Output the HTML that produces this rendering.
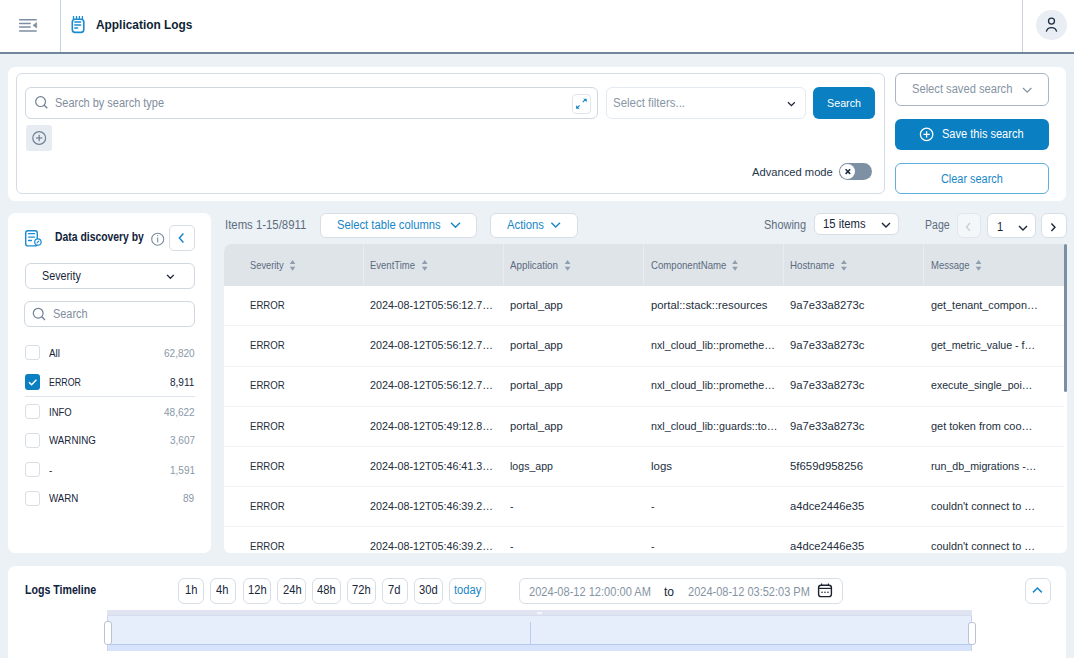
<!DOCTYPE html>
<html><head><meta charset="utf-8"><style>
html,body{margin:0;padding:0;}
body{width:1074px;height:658px;overflow:hidden;position:relative;background:#ecf1f5;font-family:"Liberation Sans",sans-serif;}
.t{position:absolute;white-space:nowrap;transform-origin:0 0;}
.b{position:absolute;box-sizing:border-box;}
svg{position:absolute;overflow:visible;}
</style></head><body>
<!-- header -->
<div class="b" style="left:0;top:0;width:1074px;height:54px;background:#fff;border-bottom:2px solid #70869c;"></div>
<div class="b" style="left:60px;top:0;width:1px;height:52px;background:#c9d1db;"></div>
<div class="b" style="left:1022px;top:0;width:1px;height:52px;background:#c9d1db;"></div>
<svg style="left:0;top:0" width="60" height="52">
  <g stroke="#7d8ea3" stroke-width="1.5" fill="none" stroke-linecap="round">
    <line x1="19.6" y1="19.7" x2="36.2" y2="19.7"/>
    <line x1="19.6" y1="23.5" x2="30.2" y2="23.5"/>
    <line x1="19.6" y1="27.1" x2="30.2" y2="27.1"/>
    <line x1="19.6" y1="31" x2="36.2" y2="31"/>
  </g>
  <path d="M33 25.3 L36.7 22.5 L36.7 28 Z" fill="#7d8ea3" stroke="#7d8ea3" stroke-width="0.6" stroke-linejoin="round"/>
</svg>
<svg style="left:0;top:0" width="100" height="52">
  <rect x="72.3" y="19.2" width="11.5" height="13.2" rx="2.8" fill="none" stroke="#1a8bd0" stroke-width="1.6"/>
  <g stroke="#1a8bd0" stroke-width="1.3"><line x1="73.5" y1="16" x2="73.5" y2="19"/><line x1="76.5" y1="16" x2="76.5" y2="19"/><line x1="79.4" y1="16" x2="79.4" y2="19"/><line x1="82.4" y1="16" x2="82.4" y2="19"/></g>
  <g stroke="#1a8bd0" stroke-width="1.5" stroke-linecap="round"><line x1="74.8" y1="22" x2="80.6" y2="22"/><line x1="74.8" y1="25" x2="80.6" y2="25"/><line x1="74.8" y1="28" x2="77.5" y2="28"/></g>
</svg>
<div class="b" style="left:1036px;top:9.6px;width:30.5px;height:30.5px;border-radius:50%;background:#e9eef4;"></div>
<svg style="left:0;top:0" width="1074" height="52">
  <circle cx="1051.5" cy="21.1" r="3.0" fill="none" stroke="#1d2e45" stroke-width="1.3"/>
  <path d="M1046.3 31.6 A5.4 5.4 0 0 1 1056.7 31.6" fill="none" stroke="#1d2e45" stroke-width="1.3"/>
</svg>

<!-- top panel -->
<div class="b" style="left:8px;top:67px;width:1058px;height:133.5px;background:#fff;border-radius:7px;"></div>
<div class="b" style="left:16px;top:73px;width:869px;height:121px;border:1px solid #d5dce5;border-radius:6px;"></div>
<div class="b" style="left:25px;top:87px;width:573px;height:32px;border:1px solid #cfd7e0;border-radius:6px;"></div>
<svg style="left:0;top:0" width="60" height="120">
  <circle cx="40.6" cy="101.6" r="4.9" fill="none" stroke="#6f8195" stroke-width="1.2"/>
  <line x1="44.2" y1="105.2" x2="47.3" y2="108.3" stroke="#6f8195" stroke-width="1.3"/>
</svg>
<div class="b" style="left:572px;top:94px;width:19px;height:20px;border:1px solid #e0e5eb;border-radius:4px;"></div>
<svg style="left:0;top:0" width="600" height="120">
  <g stroke="#1787c8" stroke-width="1.2" fill="none"><line x1="579.6" y1="105.3" x2="577.4" y2="107.5"/><line x1="582.8" y1="102.1" x2="585" y2="99.9"/></g>
  <path d="M576.1 108.7 L576.1 105.2 L579.6 108.7 Z M586.7 98.7 L583.2 98.7 L586.7 102.2 Z" fill="#1787c8"/>
</svg>
<div class="b" style="left:605.5px;top:87px;width:200.5px;height:32px;border:1px solid #e5eaf0;border-radius:6px;"></div>
<svg style="left:0;top:0" width="900" height="200">
  <path d="M788 102.3 L791.4 105.7 L794.8 102.3" fill="none" stroke="#1d2636" stroke-width="1.3"/>
</svg>
<div class="b" style="left:813px;top:87px;width:62px;height:32px;background:#0a7fc2;border-radius:6px;"></div>
<div class="b" style="left:26px;top:125px;width:26px;height:26px;background:#e6ecf2;border-radius:3px;"></div>
<svg style="left:0;top:0" width="60" height="160">
  <circle cx="39.2" cy="138" r="6.4" fill="none" stroke="#6d7f93" stroke-width="1.2"/>
  <g stroke="#6d7f93" stroke-width="1.2"><line x1="36" y1="138" x2="42.4" y2="138"/><line x1="39.2" y1="134.8" x2="39.2" y2="141.2"/></g>
</svg>
<!-- toggle -->
<div class="b" style="left:839px;top:163px;width:32.5px;height:17px;background:#7e90a4;border-radius:9px;"></div>
<div class="b" style="left:840.4px;top:164px;width:15px;height:15px;background:#fff;border-radius:50%;"></div>
<svg style="left:0;top:0" width="900" height="200">
  <g stroke="#1b2a3d" stroke-width="1.5"><line x1="845.6" y1="169.3" x2="850.2" y2="173.9"/><line x1="850.2" y1="169.3" x2="845.6" y2="173.9"/></g>
</svg>
<!-- right column -->
<div class="b" style="left:895px;top:73px;width:154px;height:33px;border:1px solid #a9b6c5;border-radius:6px;"></div>
<svg style="left:0;top:0" width="1074" height="200">
  <path d="M1023 88 L1027.2 92.2 L1031.4 88" fill="none" stroke="#8391a1" stroke-width="1.2"/>
</svg>
<div class="b" style="left:895px;top:119px;width:154px;height:31px;background:#0a7fc2;border-radius:6px;"></div>
<svg style="left:0;top:0" width="1074" height="200">
  <circle cx="926.6" cy="134.4" r="6.2" fill="none" stroke="#fff" stroke-width="1.3"/>
  <g stroke="#fff" stroke-width="1.3"><line x1="923.4" y1="134.4" x2="929.8" y2="134.4"/><line x1="926.6" y1="131.2" x2="926.6" y2="137.6"/></g>
</svg>
<div class="b" style="left:895px;top:163px;width:154px;height:31px;border:1px solid #5eaee0;border-radius:6px;"></div>

<!-- left panel -->
<div class="b" style="left:8px;top:213px;width:203px;height:340px;background:#fff;border-radius:7px;"></div>
<svg style="left:0;top:0" width="220" height="260">
  <rect x="25.7" y="230.7" width="11.6" height="15.2" rx="2.2" fill="none" stroke="#1a8bd0" stroke-width="1.4"/>
  <g stroke="#1a8bd0" stroke-width="1.3" stroke-linecap="round"><line x1="28.6" y1="233.7" x2="34.6" y2="233.7"/><line x1="28.6" y1="237.1" x2="34.6" y2="237.1"/><line x1="28.6" y1="240.5" x2="31.4" y2="240.5"/></g>
  <circle cx="37.9" cy="242" r="3.2" fill="#fff" stroke="#1a8bd0" stroke-width="1.2"/>
  <line x1="37" y1="242.9" x2="38.8" y2="241.1" stroke="#1a8bd0" stroke-width="1.1" stroke-linecap="round"/>
  <circle cx="157.7" cy="239.2" r="6" fill="none" stroke="#7c8da0" stroke-width="1.1"/>
  <line x1="157.7" y1="237.6" x2="157.7" y2="242.6" stroke="#7c8da0" stroke-width="1.1"/>
  <circle cx="157.7" cy="235.6" r="0.7" fill="#7c8da0"/>
</svg>
<div class="b" style="left:169px;top:225px;width:26px;height:26px;border:1px solid #d6dde6;border-radius:5px;"></div>
<svg style="left:0;top:0" width="220" height="260">
  <path d="M183.4 233.6 L179.4 238 L183.4 242.4" fill="none" stroke="#1787c8" stroke-width="1.5"/>
</svg>
<div class="b" style="left:25px;top:263px;width:170px;height:26px;border:1px solid #cfd7e0;border-radius:6px;"></div>
<svg style="left:0;top:0" width="220" height="300">
  <path d="M167 274.9 L170.4 278.3 L173.8 274.9" fill="none" stroke="#1d2636" stroke-width="1.3"/>
</svg>
<div class="b" style="left:24px;top:301px;width:171px;height:26px;border:1px solid #cfd7e0;border-radius:6px;"></div>
<svg style="left:0;top:0" width="220" height="340">
  <circle cx="38.2" cy="313.2" r="4.9" fill="none" stroke="#6f8195" stroke-width="1.2"/>
  <line x1="41.8" y1="316.8" x2="45" y2="320" stroke="#6f8195" stroke-width="1.3"/>
</svg>
<!-- checkboxes -->
<div class="b" style="left:25px;top:345px;width:15.3px;height:15.3px;border:1px solid #d9dfe7;border-radius:3px;"></div>
<div class="b" style="left:25px;top:374.4px;width:15.3px;height:15.3px;background:#0a7fc2;border-radius:3px;"></div>
<svg style="left:0;top:0" width="60" height="400">
  <path d="M29 382.2 L31.6 384.7 L36.4 379.8" fill="none" stroke="#fff" stroke-width="1.4"/>
</svg>
<div class="b" style="left:25px;top:396px;width:170px;height:1px;background:#dfe4ea;"></div>
<div class="b" style="left:25px;top:403.5px;width:15.3px;height:15.3px;border:1px solid #d9dfe7;border-radius:3px;"></div>
<div class="b" style="left:25px;top:432.5px;width:15.3px;height:15.3px;border:1px solid #d9dfe7;border-radius:3px;"></div>
<div class="b" style="left:25px;top:461.5px;width:15.3px;height:15.3px;border:1px solid #d9dfe7;border-radius:3px;"></div>
<div class="b" style="left:25px;top:490.5px;width:15.3px;height:15.3px;border:1px solid #d9dfe7;border-radius:3px;"></div>

<!-- toolbar -->
<div class="b" style="left:320px;top:213px;width:156.5px;height:24.5px;background:#fff;border:1px solid #d8dee6;border-radius:6px;"></div>
<div class="b" style="left:490px;top:213px;width:87.5px;height:24.5px;background:#fff;border:1px solid #d8dee6;border-radius:6px;"></div>
<svg style="left:0;top:0" width="600" height="240">
  <path d="M451 222.8 L455.5 227.3 L460 222.8" fill="none" stroke="#1787c8" stroke-width="1.4"/>
  <path d="M551.4 222.8 L555.7 227.1 L560 222.8" fill="none" stroke="#1787c8" stroke-width="1.4"/>
</svg>
<div class="b" style="left:814px;top:213px;width:85px;height:21.5px;background:#fff;border:1px solid #d8dee6;border-radius:6px;"></div>
<div class="b" style="left:956.5px;top:213px;width:24px;height:25px;background:#f4f7fa;border:1px solid #e2e7ed;border-radius:6px;"></div>
<div class="b" style="left:987px;top:213px;width:48.5px;height:24.5px;background:#fff;border:1px solid #d8dee6;border-radius:6px;"></div>
<div class="b" style="left:1041px;top:213px;width:25.5px;height:25px;background:#fff;border:1px solid #d8dee6;border-radius:6px;"></div>
<svg style="left:0;top:0" width="1074" height="240">
  <path d="M882 223 L886 227 L890 223" fill="none" stroke="#1d2636" stroke-width="1.4"/>
  <path d="M1019 226 L1023 230 L1027 226" fill="none" stroke="#1d2636" stroke-width="1.4"/>
  <path d="M970 223 L966.4 226.9 L970 230.8" fill="none" stroke="#c3ccd6" stroke-width="1.2"/>
  <path d="M1051.4 223.4 L1055 227.2 L1051.4 231" fill="none" stroke="#1d2636" stroke-width="1.4"/>
</svg>

<!-- table -->
<div class="b" style="left:224px;top:244px;width:842.5px;height:309px;background:#fff;border-radius:7px 0 6px 6px;overflow:hidden;">
  <div class="b" style="left:0;top:0;width:100%;height:41.5px;background:#dfe4e9;"></div>
</div>
<div class="b" style="left:363px;top:244px;width:1px;height:41px;background:#e9edf1;"></div>
<div class="b" style="left:503px;top:244px;width:1px;height:41px;background:#e9edf1;"></div>
<div class="b" style="left:643px;top:244px;width:1px;height:41px;background:#e9edf1;"></div>
<div class="b" style="left:783px;top:244px;width:1px;height:41px;background:#e9edf1;"></div>
<div class="b" style="left:923px;top:244px;width:1px;height:41px;background:#e9edf1;"></div>
<div class="b" style="left:224px;top:325px;width:840px;height:1px;background:#f1f3f6;"></div>
<div class="b" style="left:224px;top:365.5px;width:840px;height:1px;background:#f1f3f6;"></div>
<div class="b" style="left:224px;top:405.5px;width:840px;height:1px;background:#f1f3f6;"></div>
<div class="b" style="left:224px;top:446px;width:840px;height:1px;background:#f1f3f6;"></div>
<div class="b" style="left:224px;top:486px;width:840px;height:1px;background:#f1f3f6;"></div>
<div class="b" style="left:224px;top:526px;width:840px;height:1px;background:#f1f3f6;"></div>
<div class="b" style="left:1063.6px;top:244px;width:3px;height:148px;background:#7b8ea3;border-radius:1.5px;"></div>
<svg style="left:0;top:0" width="1074" height="300">
  <g fill="#8f9dad">
    <path d="M289.8 264 L292.55 260 L295.3 264 Z M289.8 266.8 L292.55 270.8 L295.3 266.8 Z"/>
    <path d="M421.9 264 L424.75 260 L427.6 264 Z M421.9 266.8 L424.75 270.8 L427.6 266.8 Z"/>
    <path d="M564.8 264 L567.60 260 L570.4 264 Z M564.8 266.8 L567.60 270.8 L570.4 266.8 Z"/>
    <path d="M732.2 264 L735.00 260 L737.8 264 Z M732.2 266.8 L735.00 270.8 L737.8 266.8 Z"/>
    <path d="M841.0 264 L843.90 260 L846.8 264 Z M841.0 266.8 L843.90 270.8 L846.8 266.8 Z"/>
    <path d="M975.7 264 L978.55 260 L981.4 264 Z M975.7 266.8 L978.55 270.8 L981.4 266.8 Z"/>
  </g>
</svg>

<!-- timeline -->
<div class="b" style="left:8px;top:566px;width:1058px;height:100px;background:#fff;border-radius:7px;"></div>
<div class="b" style="left:178px;top:578px;width:26px;height:25.5px;border:1px solid #d8dee6;border-radius:6px;"></div>
<div class="b" style="left:210px;top:578px;width:25.5px;height:25.5px;border:1px solid #d8dee6;border-radius:6px;"></div>
<div class="b" style="left:242.5px;top:578px;width:28.5px;height:25.5px;border:1px solid #d8dee6;border-radius:6px;"></div>
<div class="b" style="left:277px;top:578px;width:28.8px;height:25.5px;border:1px solid #d8dee6;border-radius:6px;"></div>
<div class="b" style="left:312px;top:578px;width:28.5px;height:25.5px;border:1px solid #d8dee6;border-radius:6px;"></div>
<div class="b" style="left:347px;top:578px;width:28.5px;height:25.5px;border:1px solid #d8dee6;border-radius:6px;"></div>
<div class="b" style="left:382px;top:578px;width:25.5px;height:25.5px;border:1px solid #d8dee6;border-radius:6px;"></div>
<div class="b" style="left:414px;top:578px;width:29px;height:25.5px;border:1px solid #d8dee6;border-radius:6px;"></div>
<div class="b" style="left:449px;top:578px;width:37px;height:25.5px;border:1px solid #d8dee6;border-radius:6px;"></div>
<div class="b" style="left:518.5px;top:578px;width:324.5px;height:25.5px;border:1px solid #d8dee6;border-radius:6px;"></div>
<svg style="left:0;top:0" width="1074" height="658">
  <rect x="818.6" y="585.2" width="12.8" height="11.4" rx="2.4" fill="none" stroke="#1b2230" stroke-width="1.4"/>
  <line x1="818.6" y1="588.4" x2="831.4" y2="588.4" stroke="#1b2230" stroke-width="1.2"/>
  <g stroke="#1b2230" stroke-width="1.1"><line x1="821.6" y1="583.4" x2="821.6" y2="585.6"/><line x1="828.4" y1="583.4" x2="828.4" y2="585.6"/></g>
  <g fill="#1b2230"><circle cx="822" cy="592.2" r="0.8"/><circle cx="825" cy="592.2" r="0.8"/><circle cx="828" cy="592.2" r="0.8"/></g>
</svg>
<div class="b" style="left:1025px;top:578px;width:25.5px;height:25.5px;border:1px solid #d8dee6;border-radius:6px;"></div>
<svg style="left:0;top:0" width="1074" height="658">
  <path d="M1033 592.4 L1037.4 588 L1041.8 592.4" fill="none" stroke="#1787c8" stroke-width="1.5"/>
</svg>
<!-- timeline chart -->
<div class="b" style="left:107px;top:610px;width:865px;height:5.5px;background:#dfe4f0;"></div>
<div class="b" style="left:107px;top:615.5px;width:865px;height:29px;background:#e6edfb;"></div>
<div class="b" style="left:107px;top:644px;width:865px;height:1px;background:#b6cbf4;"></div>
<div class="b" style="left:107px;top:645px;width:865px;height:6px;background:#d6e3fb;"></div>
<div class="b" style="left:107px;top:615.5px;width:1.2px;height:35px;background:#c9d5ee;"></div>
<div class="b" style="left:970.8px;top:615.5px;width:1.2px;height:35px;background:#c9d5ee;"></div>
<div class="b" style="left:530px;top:622px;width:1.3px;height:22px;background:#b8cdf5;"></div>
<div class="b" style="left:537px;top:611.7px;width:5.4px;height:2.2px;background:#f4f6fb;"></div>
<div class="b" style="left:107px;top:614.8px;width:865px;height:0.8px;background:#d6ddef;"></div>
<div class="b" style="left:104px;top:621px;width:7.8px;height:23.6px;background:#fff;border:1px solid #b9c3d3;border-radius:3px;"></div>
<div class="b" style="left:968.2px;top:621.5px;width:7.8px;height:23.2px;background:#fff;border:1px solid #b9c3d3;border-radius:3px;"></div>

<span class="t" style="top:17.69px;font-size:13.00px;line-height:13px;color:#0e1f36;font-weight:bold;left:96.00px;transform:scaleX(0.9143);">Application Logs</span>
<span class="t" style="top:96.64px;font-size:12.00px;line-height:12px;color:#7f8d9d;left:55.40px;transform:scaleX(0.9129);">Search by search type</span>
<span class="t" style="top:96.64px;font-size:12.00px;line-height:12px;color:#8896a6;left:612.90px;transform:scaleX(0.9554);">Select filters...</span>
<span class="t" style="top:97.55px;font-size:11.40px;line-height:11px;color:#ffffff;left:827.00px;transform:scaleX(0.9421);">Search</span>
<span class="t" style="top:166.08px;font-size:11.60px;line-height:12px;color:#26364a;left:752.20px;transform:scaleX(0.9643);">Advanced mode</span>
<span class="t" style="top:83.24px;font-size:12.00px;line-height:12px;color:#8593a3;left:912.00px;transform:scaleX(0.9291);">Select saved search</span>
<span class="t" style="top:128.34px;font-size:12.00px;line-height:12px;color:#ffffff;left:942.00px;transform:scaleX(0.9198);">Save this search</span>
<span class="t" style="top:172.64px;font-size:12.00px;line-height:12px;color:#1787c8;left:941.00px;transform:scaleX(0.9085);">Clear search</span>
<span class="t" style="top:230.64px;font-size:12.00px;line-height:12px;color:#10223a;font-weight:bold;left:54.70px;transform:scaleX(0.8655);">Data discovery by</span>
<span class="t" style="top:269.84px;font-size:12.00px;line-height:12px;color:#17263a;left:41.80px;transform:scaleX(0.8951);">Severity</span>
<span class="t" style="top:307.74px;font-size:12.00px;line-height:12px;color:#7f8d9d;left:53.40px;transform:scaleX(0.9100);">Search</span>
<span class="t" style="top:348.36px;font-size:10.50px;line-height:10px;color:#17263a;left:49.10px;transform:scaleX(0.9427);">All</span>
<span class="t" style="top:348.36px;font-size:10.50px;line-height:10px;color:#8a98a8;left:163.93px;transform:scaleX(0.9550);">62,820</span>
<span class="t" style="top:376.96px;font-size:10.50px;line-height:10px;color:#17263a;left:49.10px;transform:scaleX(0.8439);">ERROR</span>
<span class="t" style="top:376.96px;font-size:10.50px;line-height:10px;color:#17263a;left:170.25px;transform:scaleX(0.9550);">8,911</span>
<span class="t" style="top:406.76px;font-size:10.50px;line-height:10px;color:#17263a;left:49.10px;transform:scaleX(0.9011);">INFO</span>
<span class="t" style="top:406.76px;font-size:10.50px;line-height:10px;color:#8a98a8;left:163.93px;transform:scaleX(0.9550);">48,622</span>
<span class="t" style="top:435.06px;font-size:10.50px;line-height:10px;color:#17263a;left:49.10px;transform:scaleX(0.9294);">WARNING</span>
<span class="t" style="top:435.06px;font-size:10.50px;line-height:10px;color:#8a98a8;left:169.51px;transform:scaleX(0.9550);">3,607</span>
<span class="t" style="top:464.66px;font-size:10.50px;line-height:10px;color:#17263a;left:49.10px;transform:scaleX(0.9300);">-</span>
<span class="t" style="top:464.66px;font-size:10.50px;line-height:10px;color:#8a98a8;left:169.51px;transform:scaleX(0.9550);">1,591</span>
<span class="t" style="top:493.26px;font-size:10.50px;line-height:10px;color:#17263a;left:49.10px;transform:scaleX(0.9277);">WARN</span>
<span class="t" style="top:493.26px;font-size:10.50px;line-height:10px;color:#8a98a8;left:183.45px;transform:scaleX(0.9550);">89</span>
<span class="t" style="top:219.04px;font-size:12.00px;line-height:12px;color:#5d6d80;left:224.60px;transform:scaleX(0.9472);">Items 1-15/8911</span>
<span class="t" style="top:218.74px;font-size:12.00px;line-height:12px;color:#1787c8;left:337.00px;transform:scaleX(0.9366);">Select table columns</span>
<span class="t" style="top:218.74px;font-size:12.00px;line-height:12px;color:#1787c8;left:507.30px;transform:scaleX(0.9402);">Actions</span>
<span class="t" style="top:218.54px;font-size:12.00px;line-height:12px;color:#5d6d80;left:764.00px;transform:scaleX(0.9124);">Showing</span>
<span class="t" style="top:217.64px;font-size:12.00px;line-height:12px;color:#17263a;left:822.70px;transform:scaleX(0.9393);">15 items</span>
<span class="t" style="top:218.54px;font-size:12.00px;line-height:12px;color:#5d6d80;left:925.40px;transform:scaleX(0.8778);">Page</span>
<span class="t" style="top:221.34px;font-size:12.00px;line-height:12px;color:#17263a;left:997.20px;transform:scaleX(0.9300);">1</span>
<span class="t" style="top:260.06px;font-size:10.50px;line-height:10px;color:#5b6b7e;left:249.80px;transform:scaleX(0.8859);">Severity</span>
<span class="t" style="top:260.06px;font-size:10.50px;line-height:10px;color:#5b6b7e;left:370.40px;transform:scaleX(0.9037);">EventTime</span>
<span class="t" style="top:260.06px;font-size:10.50px;line-height:10px;color:#5b6b7e;left:510.40px;transform:scaleX(0.9345);">Application</span>
<span class="t" style="top:260.06px;font-size:10.50px;line-height:10px;color:#5b6b7e;left:650.60px;transform:scaleX(0.9162);">ComponentName</span>
<span class="t" style="top:260.06px;font-size:10.50px;line-height:10px;color:#5b6b7e;left:790.30px;transform:scaleX(0.9278);">Hostname</span>
<span class="t" style="top:260.06px;font-size:10.50px;line-height:10px;color:#5b6b7e;left:930.50px;transform:scaleX(0.9037);">Message</span>
<span class="t" style="top:300.05px;font-size:11.40px;line-height:11px;color:#222e3c;left:249.80px;transform:scaleX(0.8436);">ERROR</span>
<span class="t" style="top:300.05px;font-size:11.40px;line-height:11px;color:#222e3c;left:370.40px;transform:scaleX(0.9429);">2024-08-12T05:56:12.7…</span>
<span class="t" style="top:300.05px;font-size:11.40px;line-height:11px;color:#222e3c;left:510.40px;transform:scaleX(0.9808);">portal_app</span>
<span class="t" style="top:300.05px;font-size:11.40px;line-height:11px;color:#222e3c;left:650.60px;transform:scaleX(0.9894);">portal::stack::resources</span>
<span class="t" style="top:300.05px;font-size:11.40px;line-height:11px;color:#222e3c;left:790.30px;transform:scaleX(0.9883);">9a7e33a8273c</span>
<span class="t" style="top:300.05px;font-size:11.40px;line-height:11px;color:#222e3c;left:930.50px;transform:scaleX(0.9528);">get_tenant_compon…</span>
<span class="t" style="top:340.25px;font-size:11.40px;line-height:11px;color:#222e3c;left:249.80px;transform:scaleX(0.8436);">ERROR</span>
<span class="t" style="top:340.25px;font-size:11.40px;line-height:11px;color:#222e3c;left:370.40px;transform:scaleX(0.9429);">2024-08-12T05:56:12.7…</span>
<span class="t" style="top:340.25px;font-size:11.40px;line-height:11px;color:#222e3c;left:510.40px;transform:scaleX(0.9808);">portal_app</span>
<span class="t" style="top:340.25px;font-size:11.40px;line-height:11px;color:#222e3c;left:650.60px;transform:scaleX(0.9415);">nxl_cloud_lib::promethe…</span>
<span class="t" style="top:340.25px;font-size:11.40px;line-height:11px;color:#222e3c;left:790.30px;transform:scaleX(0.9883);">9a7e33a8273c</span>
<span class="t" style="top:340.25px;font-size:11.40px;line-height:11px;color:#222e3c;left:930.50px;transform:scaleX(0.9352);">get_metric_value - f…</span>
<span class="t" style="top:380.45px;font-size:11.40px;line-height:11px;color:#222e3c;left:249.80px;transform:scaleX(0.8436);">ERROR</span>
<span class="t" style="top:380.45px;font-size:11.40px;line-height:11px;color:#222e3c;left:370.40px;transform:scaleX(0.9429);">2024-08-12T05:56:12.7…</span>
<span class="t" style="top:380.45px;font-size:11.40px;line-height:11px;color:#222e3c;left:510.40px;transform:scaleX(0.9808);">portal_app</span>
<span class="t" style="top:380.45px;font-size:11.40px;line-height:11px;color:#222e3c;left:650.60px;transform:scaleX(0.9415);">nxl_cloud_lib::promethe…</span>
<span class="t" style="top:380.45px;font-size:11.40px;line-height:11px;color:#222e3c;left:790.30px;transform:scaleX(0.9883);">9a7e33a8273c</span>
<span class="t" style="top:380.45px;font-size:11.40px;line-height:11px;color:#222e3c;left:930.50px;transform:scaleX(0.9310);">execute_single_poi…</span>
<span class="t" style="top:420.65px;font-size:11.40px;line-height:11px;color:#222e3c;left:249.80px;transform:scaleX(0.8436);">ERROR</span>
<span class="t" style="top:420.65px;font-size:11.40px;line-height:11px;color:#222e3c;left:370.40px;transform:scaleX(0.9429);">2024-08-12T05:49:12.8…</span>
<span class="t" style="top:420.65px;font-size:11.40px;line-height:11px;color:#222e3c;left:510.40px;transform:scaleX(0.9808);">portal_app</span>
<span class="t" style="top:420.65px;font-size:11.40px;line-height:11px;color:#222e3c;left:650.60px;transform:scaleX(0.9424);">nxl_cloud_lib::guards::to…</span>
<span class="t" style="top:420.65px;font-size:11.40px;line-height:11px;color:#222e3c;left:790.30px;transform:scaleX(0.9883);">9a7e33a8273c</span>
<span class="t" style="top:420.65px;font-size:11.40px;line-height:11px;color:#222e3c;left:930.50px;transform:scaleX(0.9590);">get token from coo…</span>
<span class="t" style="top:460.85px;font-size:11.40px;line-height:11px;color:#222e3c;left:249.80px;transform:scaleX(0.8436);">ERROR</span>
<span class="t" style="top:460.85px;font-size:11.40px;line-height:11px;color:#222e3c;left:370.40px;transform:scaleX(0.9429);">2024-08-12T05:46:41.3…</span>
<span class="t" style="top:460.85px;font-size:11.40px;line-height:11px;color:#222e3c;left:510.40px;transform:scaleX(0.9300);">logs_app</span>
<span class="t" style="top:460.85px;font-size:11.40px;line-height:11px;color:#222e3c;left:650.60px;transform:scaleX(1.0050);">logs</span>
<span class="t" style="top:460.85px;font-size:11.40px;line-height:11px;color:#222e3c;left:790.30px;transform:scaleX(1.0021);">5f659d958256</span>
<span class="t" style="top:460.85px;font-size:11.40px;line-height:11px;color:#222e3c;left:930.50px;transform:scaleX(0.9362);">run_db_migrations -…</span>
<span class="t" style="top:501.05px;font-size:11.40px;line-height:11px;color:#222e3c;left:249.80px;transform:scaleX(0.8436);">ERROR</span>
<span class="t" style="top:501.05px;font-size:11.40px;line-height:11px;color:#222e3c;left:370.40px;transform:scaleX(0.9429);">2024-08-12T05:46:39.2…</span>
<span class="t" style="top:501.05px;font-size:11.40px;line-height:11px;color:#222e3c;left:510.40px;transform:scaleX(0.9300);">-</span>
<span class="t" style="top:501.05px;font-size:11.40px;line-height:11px;color:#222e3c;left:650.60px;transform:scaleX(0.9300);">-</span>
<span class="t" style="top:501.05px;font-size:11.40px;line-height:11px;color:#222e3c;left:790.30px;transform:scaleX(0.9844);">a4dce2446e35</span>
<span class="t" style="top:501.05px;font-size:11.40px;line-height:11px;color:#222e3c;left:930.50px;transform:scaleX(0.9543);">couldn't connect to …</span>
<span class="t" style="top:541.25px;font-size:11.40px;line-height:11px;color:#222e3c;left:249.80px;transform:scaleX(0.8436);">ERROR</span>
<span class="t" style="top:541.25px;font-size:11.40px;line-height:11px;color:#222e3c;left:370.40px;transform:scaleX(0.9429);">2024-08-12T05:46:39.2…</span>
<span class="t" style="top:541.25px;font-size:11.40px;line-height:11px;color:#222e3c;left:510.40px;transform:scaleX(0.9300);">-</span>
<span class="t" style="top:541.25px;font-size:11.40px;line-height:11px;color:#222e3c;left:650.60px;transform:scaleX(0.9300);">-</span>
<span class="t" style="top:541.25px;font-size:11.40px;line-height:11px;color:#222e3c;left:790.30px;transform:scaleX(0.9844);">a4dce2446e35</span>
<span class="t" style="top:541.25px;font-size:11.40px;line-height:11px;color:#222e3c;left:930.50px;transform:scaleX(0.9543);">couldn't connect to …</span>
<span class="t" style="top:583.54px;font-size:12.00px;line-height:12px;color:#10223a;font-weight:bold;left:24.80px;transform:scaleX(0.8837);">Logs Timeline</span>
<span class="t" style="top:584.04px;font-size:12.00px;line-height:12px;color:#17263a;left:184.79px;transform:scaleX(0.9300);">1h</span>
<span class="t" style="top:584.04px;font-size:12.00px;line-height:12px;color:#17263a;left:216.29px;transform:scaleX(0.9300);">4h</span>
<span class="t" style="top:584.04px;font-size:12.00px;line-height:12px;color:#17263a;left:247.69px;transform:scaleX(0.9300);">12h</span>
<span class="t" style="top:584.04px;font-size:12.00px;line-height:12px;color:#17263a;left:282.69px;transform:scaleX(0.9300);">24h</span>
<span class="t" style="top:584.04px;font-size:12.00px;line-height:12px;color:#17263a;left:316.69px;transform:scaleX(0.9300);">48h</span>
<span class="t" style="top:584.04px;font-size:12.00px;line-height:12px;color:#17263a;left:351.69px;transform:scaleX(0.9300);">72h</span>
<span class="t" style="top:584.04px;font-size:12.00px;line-height:12px;color:#17263a;left:388.29px;transform:scaleX(0.9300);">7d</span>
<span class="t" style="top:584.04px;font-size:12.00px;line-height:12px;color:#17263a;left:419.19px;transform:scaleX(0.9300);">30d</span>
<span class="t" style="top:584.04px;font-size:12.00px;line-height:12px;color:#1787c8;left:453.85px;transform:scaleX(0.9300);">today</span>
<span class="t" style="top:585.84px;font-size:12.00px;line-height:12px;color:#8593a3;left:528.80px;transform:scaleX(0.9227);">2024-08-12 12:00:00 AM</span>
<span class="t" style="top:585.84px;font-size:12.00px;line-height:12px;color:#17263a;left:663.80px;transform:scaleX(1.0092);">to</span>
<span class="t" style="top:585.84px;font-size:12.00px;line-height:12px;color:#8593a3;left:687.50px;transform:scaleX(0.9182);">2024-08-12 03:52:03 PM</span>
</body></html>
